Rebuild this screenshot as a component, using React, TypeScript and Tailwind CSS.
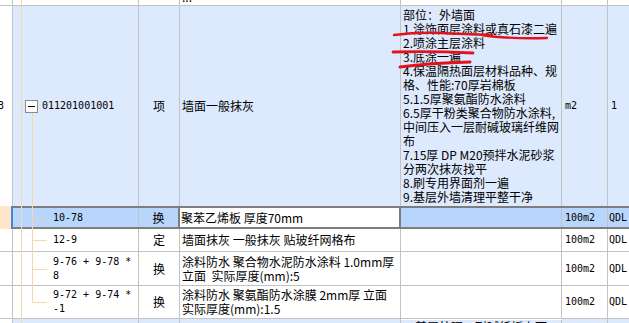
import React from "react";

const line = "bg-[#f3d8ae]";
const mono = "font-['DejaVu_Sans_Mono',monospace] text-[10px]";

const descLines = [
  "部位：外墙面",
  "1.涂饰面层涂料或真石漆二遍",
  "2.喷涂主层涂料",
  "3.底涂一遍",
  "4.保温隔热面层材料品种、规",
  "格、性能:70厚岩棉板",
  "5.1.5厚聚氨酯防水涂料",
  "6.5厚干粉类聚合物防水涂料,",
  "中间压入一层耐碱玻璃纤维网",
  "布",
  "7.15厚 DP M20预拌水泥砂浆",
  "分两次抹灰找平",
  "8.刷专用界面剂一遍",
  "9.基层外墙清理平整干净",
];

type ChildRow = {
  code: string[];
  kind: string;
  name: string[];
  h: string;
  last?: boolean;
};

const children: ChildRow[] = [
  { code: ["12-9"], kind: "定", name: ["墙面抹灰 一般抹灰 贴玻纤网格布"], h: "h-[23px]" },
  {
    code: ["9-76 + 9-78 *", "8"],
    kind: "换",
    name: ["涂料防水 聚合物水泥防水涂料 1.0mm厚", "立面  实际厚度(mm):5"],
    h: "h-[34px]",
  },
  {
    code: ["9-72 + 9-74 *", "-1"],
    kind: "换",
    name: ["涂料防水 聚氨酯防水涂膜 2mm厚 立面", "实际厚度(mm):1.5"],
    h: "h-[33px]",
    last: true,
  },
];

const Lines = ({ items, className = "" }: { items: string[]; className?: string }) => (
  <div className={`whitespace-pre ${className}`}>
    {items.map((t, i) => (
      <div key={i} className="h-[14px] leading-[14px]">
        {t}
      </div>
    ))}
  </div>
);

const Annotations = () => (
  <svg
    className="absolute left-0 top-0 pointer-events-none"
    width={629}
    height={323}
    viewBox="0 0 629 323"
  >
    <g fill="none" stroke="#e3131b" strokeLinecap="round">
      <path d="M394 35 Q 418 32 440 33 T 492 35" strokeWidth={2.4} />
      <path d="M482 35 Q 505 39 547 38" strokeWidth={2.4} />
      <path d="M393 52 Q 430 51 473 53" strokeWidth={2.8} />
      <path d="M400 67 Q 430 63 470 62" strokeWidth={3} />
    </g>
  </svg>
);

const App = () => {
  return (
    <div className="relative w-[629px] h-[323px] overflow-hidden bg-white text-black text-[12px] leading-[14px] font-['Noto_Sans_CJK_SC','Noto_Sans',sans-serif]">
      {/* top row, mostly scrolled away */}
      <div className="flex h-[6px] border-b border-[#c3c3c3] overflow-hidden">
        <div className="w-[13px] shrink-0 border-r border-[#c3c3c3]" />
        <div className="relative w-[126px] shrink-0 border-r border-[#c3c3c3]">
          <span className={`absolute left-[8px] top-0 bottom-0 w-px ${line}`} />
        </div>
        <div className="w-[41px] shrink-0 border-r border-[#c3c3c3]" />
        <div className="w-[221px] shrink-0 border-r border-[#c3c3c3] pl-[2px]">
          <div className="-mt-[10px]">...</div>
        </div>
        <div className="w-[161px] shrink-0 border-r border-[#c3c3c3]" />
        <div className="w-[46px] shrink-0 border-r border-[#c3c3c3]" />
        <div className="flex-1" />
      </div>

      {/* bill item row */}
      <div className="flex h-[200px]">
        <div className="w-[13px] shrink-0 border-r border-[#c3c3c3] flex items-center overflow-hidden">
          <span className={`-ml-[2px] ${mono}`}>3</span>
        </div>
        <div className="relative w-[126px] shrink-0 border-r border-[#c3c3c3] bg-[#dde9fc] flex items-center pl-[29px]">
          <span className={`absolute left-[8px] top-0 bottom-0 w-px ${line}`} />
          <span className={`absolute left-[8px] top-[100px] w-[4px] h-px ${line}`} />
          <span className={`absolute left-[19px] top-[107px] bottom-0 w-px ${line}`} />
          <span className="absolute left-[12px] top-[94px] w-[13px] h-[13px] border border-[#8a8a8a] bg-white flex items-center justify-center">
            <span className="w-[7px] h-px bg-black" />
          </span>
          <span className={mono}>011201001001</span>
        </div>
        <div className="w-[41px] shrink-0 border-r border-[#c3c3c3] bg-[#dde9fc] flex items-center justify-center">
          项
        </div>
        <div className="w-[221px] shrink-0 border-r border-[#c3c3c3] bg-[#dde9fc] flex items-center pl-[2px]">
          墙面一般抹灰
        </div>
        <div className="w-[161px] shrink-0 border-r border-[#c3c3c3] bg-[#dde9fc] pt-[2px] pl-[2px]">
          <Lines items={descLines} />
        </div>
        <div className={`w-[46px] shrink-0 border-r border-[#c3c3c3] bg-[#dde9fc] flex items-center pl-[3px] ${mono}`}>
          m2
        </div>
        <div className={`flex-1 bg-[#dde9fc] flex items-center pl-[3px] ${mono}`}>1</div>
      </div>

      {/* selected quota row */}
      <div className="flex h-[23px]">
        <div className="w-[13px] shrink-0 bg-[#fee6c9] border-r-2 border-[#4a86d8]" />
        <div className="flex flex-1 border-y-2 border-[#7d7d7d] bg-[#b8d6fb]">
          <div className={`relative w-[126px] shrink-0 border-r border-[#c3c3c3] flex items-center pl-[40px] ${mono}`}>
            <span className="absolute left-[8px] -top-[2px] -bottom-[2px] w-px bg-[#e6dcc8]" />
            <span className={`absolute left-[19px] -top-[2px] -bottom-[2px] w-px ${line}`} />
            <span className="absolute left-[19px] top-[10px] w-[15px] h-px bg-[#d9d2c0]" />
            10-78
          </div>
          <div className="w-[41px] shrink-0 border-r-2 border-[#7d7d7d] flex items-center justify-center">
            换
          </div>
          <div className="w-[221px] shrink-0 border-r-2 border-[#7d7d7d] bg-white flex items-center pl-[1px]">
            聚苯乙烯板 厚度70mm
          </div>
          <div className="w-[161px] shrink-0 border-r border-[#c3c3c3]" />
          <div className={`w-[46px] shrink-0 border-r border-[#c3c3c3] flex items-center pl-[3px] ${mono}`}>
            100m2
          </div>
          <div className={`flex-1 flex items-center pl-[1px] ${mono}`}>QDL</div>
        </div>
      </div>

      {/* other quota rows */}
      {children.map((r, i) => (
        <div key={i} className={`flex ${r.h} border-b border-[#c3c3c3]`}>
          <div className="w-[13px] shrink-0 border-r border-[#c3c3c3]" />
          <div className="relative w-[126px] shrink-0 border-r border-[#c3c3c3] flex items-center pl-[40px]">
            <span className={`absolute left-[8px] top-0 -bottom-px w-px ${line}`} />
            {r.last ? (
              <span className={`absolute left-[19px] top-0 h-1/2 w-px ${line}`} />
            ) : (
              <span className={`absolute left-[19px] top-0 -bottom-px w-px ${line}`} />
            )}
            <span className={`absolute left-[19px] top-1/2 w-[15px] h-px ${line}`} />
            <Lines items={r.code} className={mono} />
          </div>
          <div className="w-[41px] shrink-0 border-r border-[#c3c3c3] flex items-center justify-center">
            {r.kind}
          </div>
          <div className="w-[221px] shrink-0 border-r border-[#c3c3c3] flex items-center pl-[2px]">
            <Lines items={r.name} />
          </div>
          <div className="w-[161px] shrink-0 border-r border-[#c3c3c3]" />
          <div className={`w-[46px] shrink-0 border-r border-[#c3c3c3] flex items-center pl-[3px] ${mono}`}>
            100m2
          </div>
          <div className={`flex-1 flex items-center pl-[1px] ${mono}`}>QDL</div>
        </div>
      ))}

      {/* next bill row, cut off */}
      <div className="flex h-[20px]">
        <div className="w-[13px] shrink-0 border-r border-[#c3c3c3]" />
        <div className="relative w-[126px] shrink-0 border-r border-[#c3c3c3] bg-[#dde9fc]">
          <span className={`absolute left-[8px] top-0 bottom-0 w-px ${line}`} />
        </div>
        <div className="w-[41px] shrink-0 border-r border-[#c3c3c3] bg-[#dde9fc]" />
        <div className="w-[221px] shrink-0 border-r border-[#c3c3c3] bg-[#dde9fc]" />
        <div className="w-[161px] shrink-0 border-r border-[#c3c3c3] bg-[#dde9fc] pl-[14px] mt-[1px]">
          基层处理、耐碱纤板上面
        </div>
        <div className="w-[46px] shrink-0 border-r border-[#c3c3c3] bg-[#dde9fc]" />
        <div className="flex-1 bg-[#dde9fc]" />
      </div>

      <Annotations />
    </div>
  );
};

export default App;
